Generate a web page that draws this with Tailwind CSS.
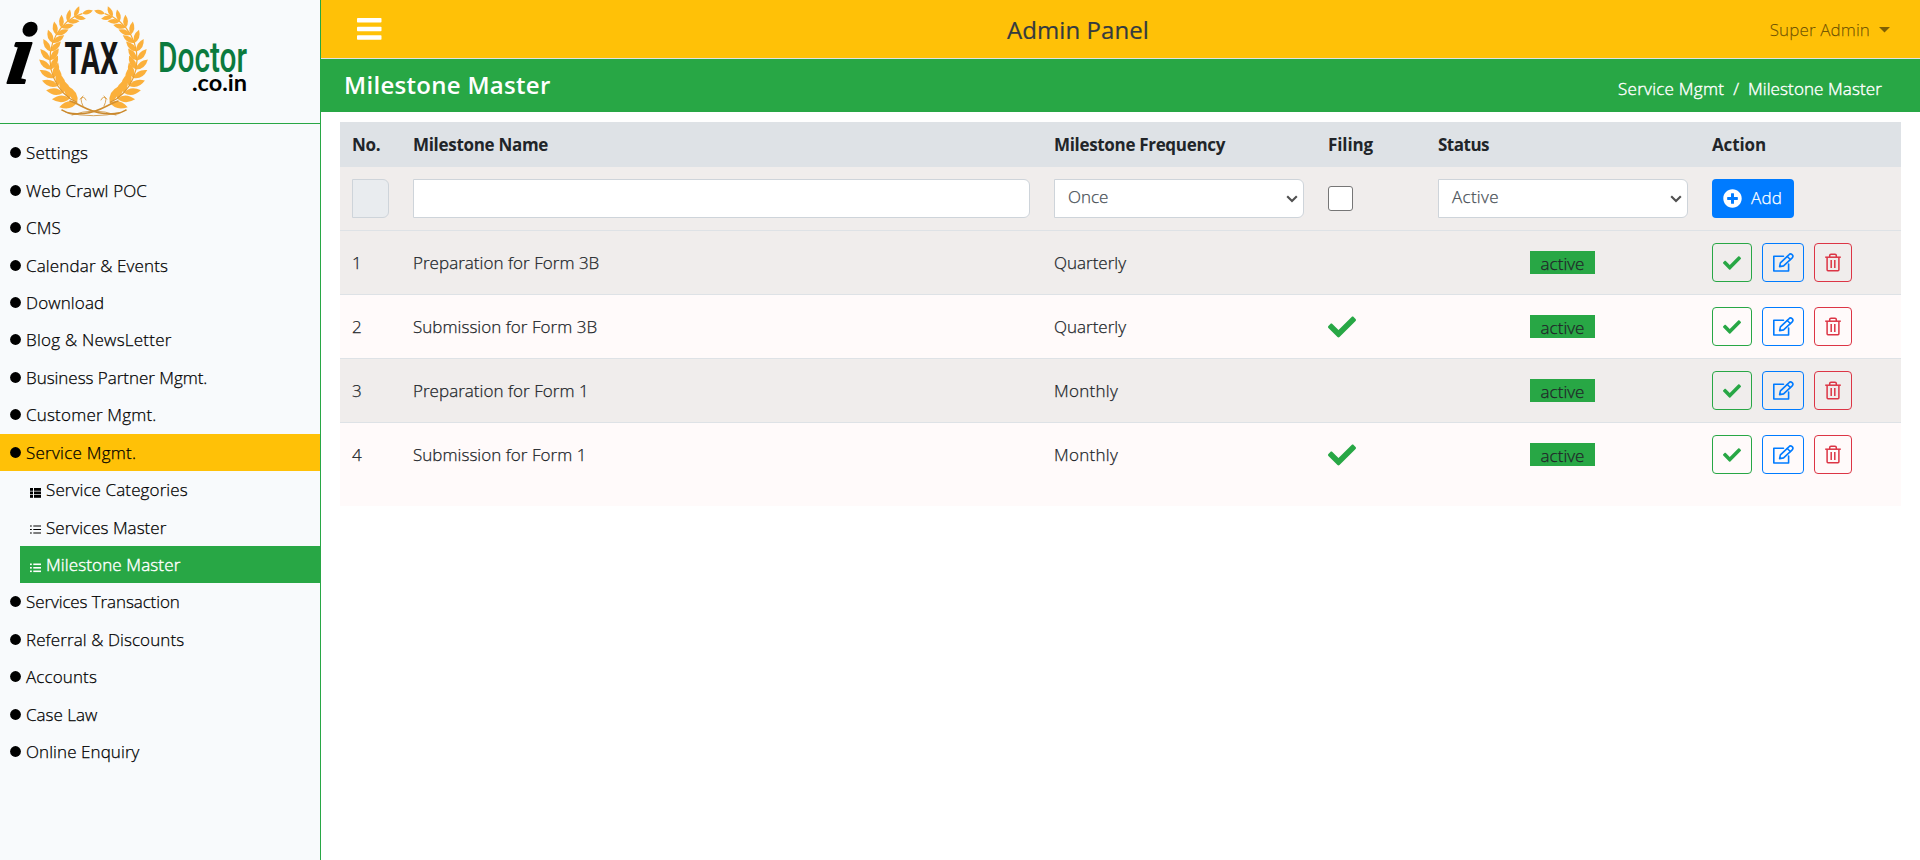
<!DOCTYPE html>
<html lang="en">
<head>
<meta charset="utf-8">
<title>Admin Panel - Milestone Master</title>
<script src="https://cdn.jsdelivr.net/npm/@tailwindcss/browser@4"></script>
</head>
<body class="flex h-[860px] overflow-hidden bg-white font-['Open_Sans','Noto_Sans',sans-serif] text-[17px] leading-6 font-light text-[#212529] [-webkit-text-stroke:0.25px]">

<svg class="hidden">
  <symbol id="check" viewBox="0 0 512 512"><path fill="currentColor" d="M173.898 439.404l-166.4-166.4c-9.997-9.997-9.997-26.206 0-36.204l36.203-36.204c9.997-9.998 26.207-9.998 36.204 0L192 312.69 432.095 72.596c9.997-9.997 26.207-9.997 36.204 0l36.203 36.204c9.997 9.997 9.997 26.206 0 36.204l-294.4 294.401c-9.998 9.997-26.207 9.997-36.204-.001z"/></symbol>
  <symbol id="plus" viewBox="0 0 512 512"><path fill="currentColor" d="M256 8C119 8 8 119 8 256s111 248 248 248 248-111 248-248S393 8 256 8zm144 276c0 6.600-5.400 12-12 12h-92v92c0 6.600-5.400 12-12 12h-56c-6.600 0-12-5.400-12-12v-92h-92c-6.600 0-12-5.400-12-12v-56c0-6.600 5.400-12 12-12h92v-92c0-6.600 5.400-12 12-12h56c6.600 0 12 5.400 12 12v92h92c6.600 0 12 5.400 12 12v56z"/></symbol>
  <symbol id="edit" viewBox="0 0 22 20"><g fill="none" stroke="currentColor" stroke-width="1.6" stroke-linejoin="round" stroke-linecap="round"><path d="M11.500 3.200H1.800V18H16.600V11"/><path d="M7.600 13.600L8.400 9.800 16.900 1.800A2.150 2.150 0 0 1 20.200 4.900L11.600 12.900z"/><path d="M15.200 3.500L18.400 6.500"/></g></symbol>
  <symbol id="trash" viewBox="0 0 16 19"><g fill="none" stroke="currentColor" stroke-width="1.500"><path d="M.2 4.200H15.800"/><path d="M4.700 4V2.600Q4.700 1.300 6 1.300H10Q11.300 1.300 11.300 2.600V4"/><path d="M2.100 4.500V16.800Q2.100 17.700 3 17.700H13Q13.900 17.700 13.900 16.800V4.500"/><path d="M6.200 7V15M9.800 7V15"/></g></symbol>
  <symbol id="chev" viewBox="0 0 12 8"><path d="M1.200 1.200L6 6 10.800 1.200" fill="none" stroke="#505050" stroke-width="2.100"/></symbol>
</svg>

<aside class="h-full w-[321px] shrink-0 border-r border-[#28a745] bg-[#f8fafc] text-black">
  <div class="h-[124px] border-b border-[#28a745]">
    <svg class="block h-[123px] w-[320px] [-webkit-text-stroke:0]" viewBox="0 0 320 123">
      <defs><linearGradient id="gold" gradientUnits="userSpaceOnUse" x1="0" y1="6" x2="0" y2="116"><stop offset="0" stop-color="#fbb03b"/><stop offset=".55" stop-color="#f3a52f"/><stop offset="1" stop-color="#c8882f"/></linearGradient></defs>
      <g id="wreath" fill="url(#gold)" stroke="url(#gold)"></g>
      <g fill="none" stroke="url(#gold)" stroke-linecap="round">
        <path stroke-width="1.600" d="M70 101C80 104 88 112 104 113.500S122 112 126 110"/>
        <path stroke-width="1.600" d="M118 101C108 104 100 112 84 113.500S66 112 62 110"/>
        <path stroke-width=".8" d="M66 112.500Q94 119 120 112.500M72 115Q94 107 116 115M83 106Q79 98 83 96M104 106Q108 98 104 96M80 99Q84 95 86 100M107 99Q103 95 101 100"/>
      </g>
      <text x="6" y="83.500" transform="translate(11 0) skewX(-8)" font-family="Liberation Serif" font-weight="700" font-style="italic" font-size="87" stroke="#000" stroke-width="2" stroke-linejoin="round">i</text>
      <text x="64.500" y="73.500" font-family="Roboto" font-weight="700" font-size="45" fill="#151515" textLength="53.500" lengthAdjust="spacingAndGlyphs">TAX</text>
      <text x="158" y="72" font-family="Roboto" font-weight="500" font-size="42" fill="#0b7a3e" textLength="89" lengthAdjust="spacingAndGlyphs">Doctor</text>
      <text x="192" y="91" font-family="Lato" font-weight="700" font-size="23" fill="#000" textLength="55" lengthAdjust="spacingAndGlyphs">.co.in</text>
    </svg>
  </div>
  <nav id="menu" class="flex flex-col pt-[10px]"></nav>
</aside>

<main class="flex min-w-0 grow flex-col">
  <header class="flex h-[59px] shrink-0 items-center border-b border-[#dee2e6] bg-[#ffc107]">
    <div class="w-[148px] pl-9"><svg class="h-[22px] w-[25px]" viewBox="0 0 25 22" fill="#fff"><rect y="0" width="24.500" height="4.500" rx=".8"/><rect y="8.700" width="24.500" height="4.500" rx=".8"/><rect y="17.200" width="24.500" height="4.500" rx=".8"/></svg></div>
    <h1 class="grow pt-0.5 pl-[7px] text-center text-2xl font-normal tracking-[0.08px] text-[#343a40] [-webkit-text-stroke:0.2px]">Admin Panel</h1>
    <div class="flex w-[240px] items-center justify-end gap-[9px] pt-px pr-[30px] text-black/50"><span class="tracking-[0.12px]">Super Admin</span><svg class="h-[6px] w-[11px]" viewBox="0 0 11 6"><path d="M0 0H11L5.500 5.500z" fill="currentColor"/></svg></div>
  </header>
  <div class="flex h-[53px] shrink-0 items-center justify-between bg-[#28a745] pr-[38px] pl-[23px] text-white">
    <h2 class="pb-px text-2xl font-semibold tracking-[0.3px] [-webkit-text-stroke:0]">Milestone Master</h2>
    <div class="flex gap-[9px] pt-[7px] [-webkit-text-stroke:0.4px]"><span class="tracking-[0.26px]">Service Mgmt</span><span>/</span><span class="tracking-[0.11px]">Milestone Master</span></div>
  </div>

  <section class="mx-[19px] mt-[10px] h-[384px] w-[1561px] bg-[#fffafa]">
    <div class="grid h-[45px] grid-cols-[61px_641px_274px_110px_274px_201px] items-center bg-[#dee2e6] font-bold [&>*]:pl-3 [-webkit-text-stroke:0]">
      <span class="tracking-[-0.3px]">No.</span><span class="tracking-[-0.3px]">Milestone Name</span><span class="tracking-[-0.32px]">Milestone Frequency</span><span class="tracking-[-0.11px]">Filing</span><span class="tracking-[-0.5px]">Status</span><span class="tracking-[-0.12px]">Action</span>
    </div>
    <div class="grid h-[63px] grid-cols-[61px_641px_274px_110px_274px_201px] items-center bg-[#f0edec] [&>*]:px-3">
      <div><div class="h-[39px] rounded-r-md border border-[#ced4da] bg-[#e9ecef]"></div></div>
      <div><div class="h-[39px] rounded-r-md border border-[#ced4da] bg-white"></div></div>
      <div><div class="flex h-[39px] items-center justify-between rounded-r-md border border-[#ced4da] bg-white pr-[5px] pl-[13px] text-[#495057]"><span class="pb-[3px]">Once</span><svg class="h-2 w-3"><use href="#chev"/></svg></div></div>
      <div><div class="h-[25px] w-[25px] rounded-[3px] border border-[#767676] bg-white"></div></div>
      <div><div class="flex h-[39px] items-center justify-between rounded-r-md border border-[#ced4da] bg-white pr-[5px] pl-[13px] text-[#495057]"><span class="pb-[3px] tracking-[0.3px]">Active</span><svg class="h-2 w-3"><use href="#chev"/></svg></div></div>
      <div><div class="flex h-[39px] w-[82px] items-center gap-[9px] rounded bg-[#007bff] pl-[11px] text-white"><svg class="h-[19px] w-[19px]"><use href="#plus"/></svg><span class="pb-px tracking-[0.18px]">Add</span></div></div>
    </div>
    <div id="rows"></div>
  </section>
</main>

<script>
/* sidebar */
const dot = '<svg class="mr-[5px] h-[11px] w-[11px] shrink-0" viewBox="0 0 11 11"><circle cx="5.500" cy="5.500" r="5.400" fill="#000"/></svg>';
const listIcon = h => `<svg class="mt-[5px] mr-[5px] h-[11px] w-[11px] shrink-0" viewBox="0 0 11 11" fill="currentColor">${[1, 4.5, 8].map(y =>
  h === 3 ? `<rect x="0" y="${y}" width="3" height="2.800"/><rect x="4" y="${y}" width="7.200" height="2.800"/>`
          : `<rect x="0" y="${y + .5}" width="1.800" height="${h}"/><rect x="3.300" y="${y + .5}" width="7.800" height="${h}"/>`).join('')}</svg>`;
const menu = [
  ['Settings', 'tracking-[0.17px]'], ['Web Crawl POC', 'tracking-[0.14px]'], ['CMS', 'tracking-[0.17px]'],
  ['Calendar &amp; Events', 'tracking-[0.14px]'], ['Download', 'tracking-[0.14px]'], ['Blog &amp; NewsLetter', 'tracking-[0.25px]'],
  ['Business Partner Mgmt.', 'tracking-[-0.03px]'], ['Customer Mgmt.', 'tracking-[0.2px]'],
  ['Service Mgmt.', 'tracking-[0.25px]', 'bg-[#ffc107]'],
  ['Service Categories', 'tracking-[0.11px]', '', 3], ['Services Master', 'tracking-[0.03px]', '', 1],
  ['Milestone Master', 'tracking-[0.13px]', 'bg-[#28a745] text-white [-webkit-text-stroke:0.4px]', 1.6],
  ['Services Transaction', 'tracking-[-0.1px]'], ['Referral &amp; Discounts', 'tracking-[0.09px]'],
  ['Accounts', 'tracking-[0.12px]'], ['Case Law', 'tracking-[0px]'], ['Online Enquiry', 'tracking-[0.08px]']];
document.getElementById('menu').innerHTML = menu.map(([t, tr, bg = '', icon]) =>
  `<a class="flex h-[37.45px] items-center pl-[10px] ${icon ? 'ml-5' : ''} ${bg}">${icon ? listIcon(icon) : dot}<span class="pt-px ${tr}">${t}</span></a>`).join('');

/* table rows */
const rows = [
  ['Preparation for Form 3B', 'Quarterly', false, 'bg-[#f0edec]'],
  ['Submission for Form 3B', 'Quarterly', true, 'bg-[#fffafa]'],
  ['Preparation for Form 1', 'Monthly', false, 'bg-[#f0edec]'],
  ['Submission for Form 1', 'Monthly', true, 'bg-[#fffafa]']];
document.getElementById('rows').innerHTML = rows.map(([n, f, c, bg], i) => `
  <div class="grid h-16 grid-cols-[61px_641px_274px_110px_274px_201px] items-center border-t border-[#dee2e6] ${bg} [&>*]:px-3">
    <span class="pt-px">${i + 1}</span><span class="pt-px tracking-[0.03px]">${n}</span><span class="pt-px ${f === 'Monthly' ? 'tracking-[0.28px]' : ''}">${f}</span>
    <div class="text-[#28a745]">${c ? '<svg class="h-7 w-7"><use href="#check"/></svg>' : ''}</div>
    <div class="flex pl-[104px]!"><span class="h-[23px] w-[65px] bg-[#28a745] pt-px text-center leading-[23px]">active</span></div>
    <div class="flex gap-[10px]">
      <span class="flex h-[39px] w-10 items-center justify-center rounded border border-[#28a745] text-[#28a745]"><svg class="h-[18px] w-[18px]"><use href="#check"/></svg></span>
      <span class="flex h-[39px] w-[42px] items-center justify-center rounded border border-[#007bff] text-[#007bff]"><svg class="h-5 w-[22px]"><use href="#edit"/></svg></span>
      <span class="flex h-[39px] w-[38px] items-center justify-center rounded border border-[#dc3545] pb-px text-[#dc3545]"><svg class="h-[19px] w-4"><use href="#trash"/></svg></span>
    </div>
  </div>`).join('');

/* laurel wreath: leaf pairs along both stems, shrinking towards the top */
let leaves = '';
const N = 13;
for (const side of [-1, 1]) {
  let stem = '';
  for (let k = 0; k <= N; k++) {
    const a = (22 + k * (143 / N)) * Math.PI / 180, s = 1 - k / N * .4;
    const x = 93.5 + side * 43.5 * Math.sin(a), y = 59 + 47 * Math.cos(a);
    const dir = Math.atan2(-47 * Math.sin(a), side * 43.5 * Math.cos(a)) * 180 / Math.PI;
    stem += (k ? 'L' : 'M') + x.toFixed(1) + ' ' + y.toFixed(1);
    for (const turn of k === N ? [0] : [-38, 38]) {
      const L = 18.5 * s, w = 5 * s;
      leaves += `<path stroke="none" transform="translate(${x.toFixed(1)} ${y.toFixed(1)}) rotate(${(dir + turn).toFixed(1)})" d="M0 0Q${L * .45} ${-w * 1.4} ${L} 0Q${L * .45} ${w * 1.4} 0 0z"/>`;
    }
  }
  leaves += `<path fill="none" stroke-width="1.200" d="${stem}"/>`;
}
document.getElementById('wreath').innerHTML = leaves;
</script>
</body>
</html>
